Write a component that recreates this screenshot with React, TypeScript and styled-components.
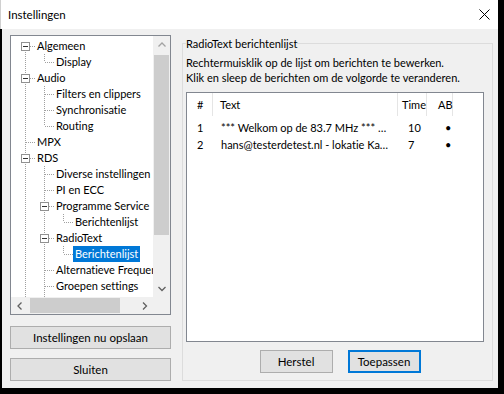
import React from 'react';
import styled, { createGlobalStyle, css } from 'styled-components';

const FONT = `Lato, "Noto Sans", "Liberation Sans", sans-serif`;
const SIZE = '11px';

const GlobalStyle = createGlobalStyle`
  html, body { margin: 0; padding: 0; background: #000; }
  body {
    width: 504px; height: 394px; overflow: hidden;
    font-family: ${FONT}; font-size: ${SIZE}; color: #000;
    font-variant-ligatures: none;
  }
  * { box-sizing: border-box; }
`;

const Window = styled.div`
  width: 498px;
  height: 388px;
  background: #f0f0f0;
  display: flex;
  flex-direction: column;
`;

const TitleBar = styled.div`
  height: 29px;
  flex: none;
  background: #fff;
  display: flex;
  align-items: center;
  justify-content: space-between;
  padding: 0 8px 0 7px;
  border-left: 1px solid #d0d0d0;
`;

const Title = styled.span`
  font-size: 11.5px;
  line-height: 16px;
`;

const CloseIcon = styled.svg`
  display: block;
`;

const Body = styled.div`
  flex: 1;
  display: flex;
  gap: 11px;
  padding: 6px 0 0 8px;
  border-left: 2px solid #000;
`;

const LeftCol = styled.div`
  width: 161px;
  display: flex;
  flex-direction: column;
  gap: 9px;
`;

const TreeBox = styled.div`
  height: 280px;
  margin-bottom: 1px;
  border: 1px solid #828790;
  background: #fff;
  display: grid;
  grid-template-columns: 1fr 17px;
  grid-template-rows: 1fr 17px;
`;

const TreeContent = styled.div`
  overflow: hidden;
  padding-top: 2px;
`;

const TreeRow = styled.div`
  height: 16px;
  display: flex;
  align-items: center;
  padding-left: 5px;
  white-space: nowrap;
`;

const GuideSvg = styled.svg`
  flex: none;
  display: block;
`;

const NodeLabel = styled.span<{ $selected?: boolean }>`
  height: 16px;
  line-height: 16px;
  padding: 0 2px;
  font-size: 11px;
  ${(p) =>
    p.$selected &&
    css`
      background: #0078d7;
      color: #fff;
    `}
`;

const VScroll = styled.div`
  background: #f0f0f0;
  display: flex;
  flex-direction: column;
`;

const HScroll = styled.div`
  background: #f0f0f0;
  display: flex;
`;

const Corner = styled.div`
  background: #f0f0f0;
`;

const ArrowBtn = styled.div`
  width: 17px;
  height: 17px;
  flex: none;
  display: flex;
  align-items: center;
  justify-content: center;
`;

const VTrack = styled.div`
  flex: 1;
  padding: 2px 1px 0 1px;
`;

const VThumb = styled.div`
  height: 180px;
  background: #cdcdcd;
`;

const HTrack = styled.div`
  flex: 1;
  padding: 1px 0 1px 2px;
`;

const HThumb = styled.div`
  width: 90px;
  height: 15px;
  background: #cdcdcd;
`;

const Button = styled.button<{ $primary?: boolean; $width?: number }>`
  height: 23px;
  width: ${(p) => (p.$width ? `${p.$width}px` : '100%')};
  margin: 0;
  padding: 0;
  font-family: ${FONT};
  font-size: 11.5px;
  font-variant-ligatures: none;
  color: #000;
  background: #e1e1e1;
  border: 1px solid #adadad;
  ${(p) =>
    p.$primary &&
    css`
      border-color: #0078d7;
      box-shadow: inset 0 0 0 1px #0078d7;
    `}
`;

const LeftButton = styled(Button)`
  margin-top: 1px;
`;

const GroupBox = styled.fieldset`
  margin: 0;
  width: 311px;
  min-width: 0;
  padding: 0 3px 7px 3px;
  border: 1px solid #dcdcdc;
  align-self: flex-start;
  display: flex;
  flex-direction: column;
`;

const Legend = styled.legend`
  padding: 0;
  line-height: 17px;
`;

const HelpText = styled.div`
  margin-top: 3px;
  line-height: 15px;
  white-space: nowrap;
`;

const ListView = styled.div`
  margin-top: 7px;
  width: 298px;
  height: 250px;
  border: 1px solid #828790;
  background: #fff;
`;

const COLS = '26px 185px 29px 26px';

const HeaderRow = styled.div`
  display: grid;
  grid-template-columns: ${COLS};
  height: 23px;
`;

const HeaderCell = styled.div<{ $pad: number }>`
  line-height: 23px;
  padding-left: ${(p) => p.$pad}px;
  border-right: 1px solid #e5e5e5;
  white-space: nowrap;
`;

const Rows = styled.div`
  padding-top: 3px;
`;

const DataRow = styled.div`
  display: grid;
  grid-template-columns: ${COLS};
  height: 17px;
`;

const Cell = styled.div<{ $pad: number }>`
  line-height: 17px;
  padding-left: ${(p) => p.$pad}px;
  white-space: nowrap;
  overflow: hidden;
`;

const ButtonRow = styled.div`
  margin-top: 8px;
  display: flex;
  justify-content: center;
  gap: 15px;
  padding-left: 5px;
`;

type TreeItem = { label: string; guides: string; box?: boolean; selected?: boolean };

const tree: TreeItem[] = [
  { label: 'Algemeen', guides: 'F', box: true },
  { label: 'Display', guides: 'IL' },
  { label: 'Audio', guides: 'T', box: true },
  { label: 'Filters en clippers', guides: 'IT' },
  { label: 'Synchronisatie', guides: 'IT' },
  { label: 'Routing', guides: 'IL' },
  { label: 'MPX', guides: 'T' },
  { label: 'RDS', guides: 'T', box: true },
  { label: 'Diverse instellingen', guides: 'IT' },
  { label: 'PI en ECC', guides: 'IT' },
  { label: 'Programme Service', guides: 'IT', box: true },
  { label: 'Berichtenlijst', guides: 'IIL' },
  { label: 'RadioText', guides: 'IT', box: true },
  { label: 'Berichtenlijst', guides: 'IIL', selected: true },
  { label: 'Alternatieve Frequenties', guides: 'IT' },
  { label: 'Groepen settings', guides: 'IT' },
  { label: '', guides: 'IT' },
];

const LINE = '#a0a0a0';

function Guide({ kind, box }: { kind: string; box?: boolean }) {
  const top = kind === 'I' || kind === 'T' || kind === 'L';
  const bottom = kind === 'I' || kind === 'T' || kind === 'F';
  const horiz = kind === 'T' || kind === 'L' || kind === 'F';
  return (
    <GuideSvg width={19} height={16} viewBox="0 0 19 16" shapeRendering="crispEdges">
      {top && <line x1={9.5} y1={0} x2={9.5} y2={8} stroke={LINE} strokeDasharray="1 1" />}
      {bottom && <line x1={9.5} y1={8} x2={9.5} y2={16} stroke={LINE} strokeDasharray="1 1" />}
      {horiz && <line x1={box ? 14 : 10} y1={8.5} x2={19} y2={8.5} stroke={LINE} strokeDasharray="1 1" />}
      {box && (
        <>
          <rect x={5.5} y={4.5} width={8} height={8} fill="#fff" stroke="#919191" />
          <line x1={7} y1={8.5} x2={12} y2={8.5} stroke="#333" />
        </>
      )}
    </GuideSvg>
  );
}

function Chevron({ dir, color }: { dir: 'up' | 'down' | 'left' | 'right'; color: string }) {
  const pts: Record<string, string> = {
    up: '0.5,4.5 4,1 7.5,4.5',
    down: '0.5,1 4,4.5 7.5,1',
    left: '4.5,0.5 1,4 4.5,7.5',
    right: '1,0.5 4.5,4 1,7.5',
  };
  const vertical = dir === 'up' || dir === 'down';
  const w = vertical ? 8 : 6;
  const h = vertical ? 6 : 8;
  return (
    <svg width={w} height={h} viewBox={`0 0 ${w} ${h}`}>
      <polyline points={pts[dir]} fill="none" stroke={color} strokeWidth={1.3} />
    </svg>
  );
}

const messages = [
  { n: '1', text: '*** Welkom op de 83.7 MHz *** …', time: '10', ab: '•' },
  { n: '2', text: 'hans@testerdetest.nl - lokatie Ka…', time: '7', ab: '•' },
];

export default function App() {
  return (
    <>
      <GlobalStyle />
      <Window>
        <TitleBar>
          <Title>Instellingen</Title>
          <CloseIcon width={11} height={11} viewBox="0 0 11 11">
            <path d="M0.5 0.5 L10.5 10.5 M10.5 0.5 L0.5 10.5" stroke="#000" strokeWidth={1} />
          </CloseIcon>
        </TitleBar>
        <Body>
          <LeftCol>
            <TreeBox>
              <TreeContent>
                {tree.map((item, i) => (
                  <TreeRow key={i}>
                    {item.guides.split('').map((g, k) => (
                      <Guide key={k} kind={g} box={k === item.guides.length - 1 ? item.box : false} />
                    ))}
                    <NodeLabel $selected={item.selected}>{item.label}</NodeLabel>
                  </TreeRow>
                ))}
              </TreeContent>
              <VScroll>
                <ArrowBtn>
                  <Chevron dir="up" color="#a3a3a3" />
                </ArrowBtn>
                <VTrack>
                  <VThumb />
                </VTrack>
                <ArrowBtn>
                  <Chevron dir="down" color="#606060" />
                </ArrowBtn>
              </VScroll>
              <HScroll>
                <ArrowBtn>
                  <Chevron dir="left" color="#606060" />
                </ArrowBtn>
                <HTrack>
                  <HThumb />
                </HTrack>
                <ArrowBtn>
                  <Chevron dir="right" color="#606060" />
                </ArrowBtn>
              </HScroll>
              <Corner />
            </TreeBox>
            <LeftButton>Instellingen nu opslaan</LeftButton>
            <Button>Sluiten</Button>
          </LeftCol>
          <GroupBox>
            <Legend>RadioText berichtenlijst</Legend>
            <HelpText>
              Rechtermuisklik op de lijst om berichten te bewerken.
              <br />
              Klik en sleep de berichten om de volgorde te veranderen.
            </HelpText>
            <ListView>
              <HeaderRow>
                <HeaderCell $pad={10}>#</HeaderCell>
                <HeaderCell $pad={7}>Text</HeaderCell>
                <HeaderCell $pad={4}>Time</HeaderCell>
                <HeaderCell $pad={11}>AB</HeaderCell>
              </HeaderRow>
              <Rows>
                {messages.map((m) => (
                  <DataRow key={m.n}>
                    <Cell $pad={10}>{m.n}</Cell>
                    <Cell $pad={8}>{m.text}</Cell>
                    <Cell $pad={10}>{m.time}</Cell>
                    <Cell $pad={18}>{m.ab}</Cell>
                  </DataRow>
                ))}
              </Rows>
            </ListView>
            <ButtonRow>
              <Button $width={73}>Herstel</Button>
              <Button $width={73} $primary>
                Toepassen
              </Button>
            </ButtonRow>
          </GroupBox>
        </Body>
      </Window>
    </>
  );
}
